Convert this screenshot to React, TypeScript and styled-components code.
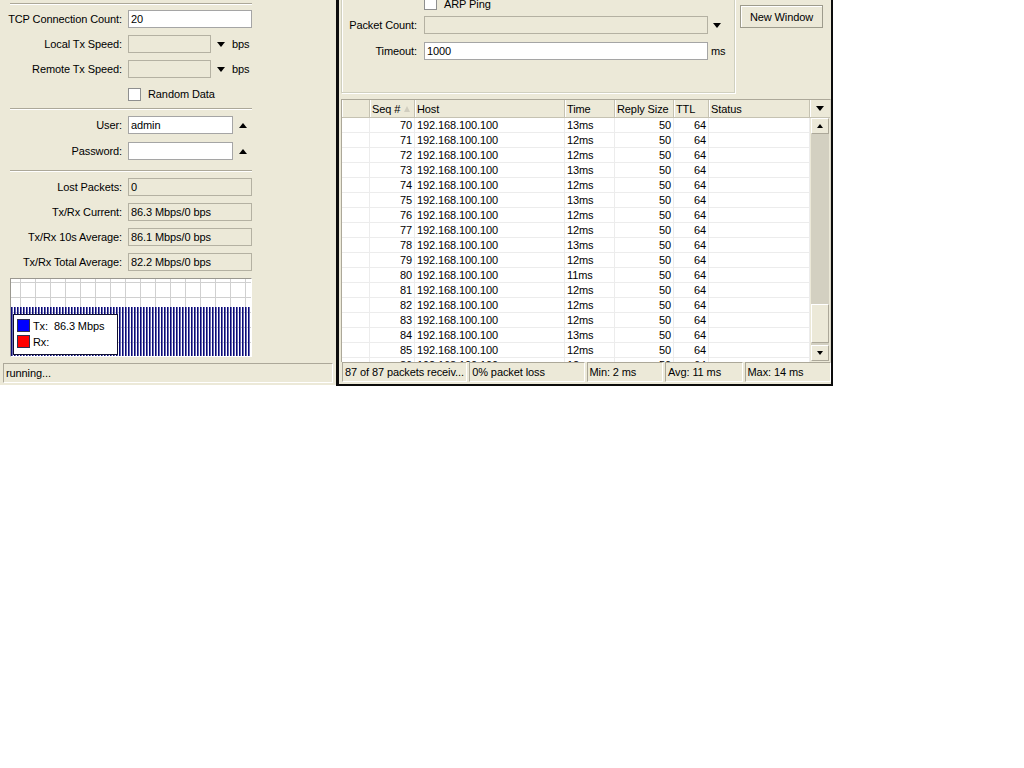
import styled, { createGlobalStyle } from 'styled-components';

const GlobalStyle = createGlobalStyle`
  html, body {
    margin: 0;
    padding: 0;
    background: #fff;
  }

  body {
    font-family: "Liberation Sans", Arial, sans-serif;
    font-size: 11px;
    letter-spacing: -0.1px;
    color: #000;
  }
`;

const times = [13, 12, 12, 13, 12, 13, 12, 12, 13, 12, 11, 12, 12, 12, 13, 12, 12];

const rows = times.map((t, i) => ({
  seq: 70 + i,
  host: '192.168.100.100',
  time: `${t}ms`,
  size: 50,
  ttl: 64,
}));

type Align = 'left' | 'right';

interface Column {
  title: string;
  width: number;
  align: Align;
  sorted?: boolean;
}

const columns: Column[] = [
  { title: '', width: 28, align: 'left' },
  { title: 'Seq #', width: 45, align: 'right', sorted: true },
  { title: 'Host', width: 150, align: 'left' },
  { title: 'Time', width: 50, align: 'left' },
  { title: 'Reply Size', width: 59, align: 'right' },
  { title: 'TTL', width: 35, align: 'right' },
  { title: 'Status', width: 101, align: 'left' },
];

const statusCells = [
  { text: '87 of 87 packets receiv...', width: 126 },
  { text: '0% packet loss', width: 116 },
  { text: 'Min: 2 ms', width: 77 },
  { text: 'Avg: 11 ms', width: 78 },
  { text: 'Max: 14 ms', width: 87 },
];

const Graph = () => {
  const bars = [];
  for (let x = 0; x < 240; x += 3) {
    bars.push(
      <g key={x}>
        <rect x={x} y={28} width={1} height={49} fill="#0a0a78" />
        <rect x={x + 1} y={28} width={1} height={49} fill="#6a6ab0" />
      </g>,
    );
  }
  const vLines = [];
  for (let x = 9; x < 240; x += 15) {
    vLines.push(<line key={x} x1={x + 0.5} y1={0} x2={x + 0.5} y2={77} stroke="#d0d0d0" />);
  }
  const hLines = [3, 18, 33, 48, 63].map((y) => (
    <line key={y} x1={0} y1={y + 0.5} x2={240} y2={y + 0.5} stroke="#d0d0d0" />
  ));

  return (
    <svg width="240" height="77" viewBox="0 0 240 77">
      <rect x={0} y={0} width={240} height={77} fill="#fff" />
      {vLines}
      {hLines}
      {bars}
    </svg>
  );
};

const App = () => {
  return (
    <>
      <GlobalStyle />
      <Desktop>
        <LeftWindow>
          <Separator />
          <Section $top={5} $bottom={5} $gap={7}>
            <FormRow>
              <Label>TCP Connection Count:</Label>
              <Field $width={124}>20</Field>
            </FormRow>
            <FormRow>
              <Label>Local Tx Speed:</Label>
              <Field $width={83} $disabled />
              <DownArrow $gap={6} />
              <Unit $gap={7}>bps</Unit>
            </FormRow>
            <FormRow>
              <Label>Remote Tx Speed:</Label>
              <Field $width={83} $disabled />
              <DownArrow $gap={6} />
              <Unit $gap={7}>bps</Unit>
            </FormRow>
            <FormRow>
              <Label />
              <CheckBox />
              <CheckText>Random Data</CheckText>
            </FormRow>
          </Section>
          <Separator />
          <Section $top={6} $bottom={10} $gap={8}>
            <FormRow>
              <Label>User:</Label>
              <Field $width={105}>admin</Field>
              <UpArrow />
            </FormRow>
            <FormRow>
              <Label>Password:</Label>
              <Field $width={105} />
              <UpArrow />
            </FormRow>
          </Section>
          <Separator />
          <Section $top={6} $bottom={0} $gap={7}>
            <FormRow>
              <Label>Lost Packets:</Label>
              <Field $width={124} $disabled>0</Field>
            </FormRow>
            <FormRow>
              <Label>Tx/Rx Current:</Label>
              <Field $width={124} $disabled>86.3 Mbps/0 bps</Field>
            </FormRow>
            <FormRow>
              <Label>Tx/Rx 10s Average:</Label>
              <Field $width={124} $disabled>86.1 Mbps/0 bps</Field>
            </FormRow>
            <FormRow>
              <Label>Tx/Rx Total Average:</Label>
              <Field $width={124} $disabled>82.2 Mbps/0 bps</Field>
            </FormRow>
          </Section>
          <GraphFrame>
            <Graph />
            <Legend>
              <LegendItem>
                <Swatch $color="#0000ff" />
                <LegendText>Tx:  86.3 Mbps</LegendText>
              </LegendItem>
              <LegendItem>
                <Swatch $color="#ff0000" />
                <LegendText>Rx:</LegendText>
              </LegendItem>
            </Legend>
          </GraphFrame>
          <StatusLine>running...</StatusLine>
        </LeftWindow>

        <RightWindow>
          <TopArea>
            <GroupBox>
              <CheckRow>
                <CheckBox />
                <CheckText>ARP Ping</CheckText>
              </CheckRow>
              <GroupRow>
                <GroupLabel>Packet Count:</GroupLabel>
                <Field $width={284} $disabled />
                <DownArrow $gap={5} />
              </GroupRow>
              <GroupRow>
                <GroupLabel>Timeout:</GroupLabel>
                <Field $width={284}>1000</Field>
                <Unit $gap={3}>ms</Unit>
              </GroupRow>
            </GroupBox>
            <Button>New Window</Button>
          </TopArea>

          <Table>
            <HeaderRow>
              {columns.map((col, i) => (
                <HeaderCell key={i} $width={col.width}>
                  {col.title}
                  {col.sorted && <SortMark />}
                </HeaderCell>
              ))}
              <HeaderMenu>
                <DownArrow $gap={0} />
              </HeaderMenu>
            </HeaderRow>
            <TableBody>
              <RowArea>
                {rows.map((row) => (
                  <Row key={row.seq}>
                    <Cell $width={28} $align="left" />
                    <Cell $width={45} $align="right">{row.seq}</Cell>
                    <Cell $width={150} $align="left">{row.host}</Cell>
                    <Cell $width={50} $align="left">{row.time}</Cell>
                    <Cell $width={59} $align="right">{row.size}</Cell>
                    <Cell $width={35} $align="right">{row.ttl}</Cell>
                    <Cell $width={101} $align="left" />
                  </Row>
                ))}
              </RowArea>
              <ScrollBar>
                <ScrollButton>
                  <SmallUp />
                </ScrollButton>
                <ScrollTrack>
                  <ScrollThumb />
                </ScrollTrack>
                <ScrollButton>
                  <SmallDown />
                </ScrollButton>
              </ScrollBar>
            </TableBody>
          </Table>

          <StatusBar>
            {statusCells.map((cell) => (
              <StatusCell key={cell.text} $width={cell.width}>
                {cell.text}
              </StatusCell>
            ))}
          </StatusBar>
        </RightWindow>
      </Desktop>
    </>
  );
};

const Desktop = styled.div`
  display: flex;
  align-items: flex-start;
`;

const LeftWindow = styled.div`
  display: flex;
  width: 336px;
  height: 385px;
  padding-top: 3px;
  flex-direction: column;
  box-sizing: border-box;

  background: #ece9d8;
`;

const Separator = styled.div`
  width: 242px;
  margin-left: 10px;

  border-top: 1px solid #aca899;
  border-bottom: 1px solid #fff;
`;

const Section = styled.div<{ $top: number; $bottom: number; $gap: number }>`
  display: flex;
  padding: ${({ $top, $bottom }) => `${$top}px 0 ${$bottom}px`};
  flex-direction: column;
  gap: ${({ $gap }) => $gap}px;
`;

const FormRow = styled.div`
  display: flex;
  height: 18px;
  align-items: center;
`;

const Label = styled.div`
  width: 122px;
  margin-right: 6px;
  flex-shrink: 0;

  text-align: right;
  white-space: nowrap;
`;

const Field = styled.div<{ $width: number; $disabled?: boolean }>`
  display: flex;
  width: ${({ $width }) => $width}px;
  height: 18px;
  padding-left: 2px;
  box-sizing: border-box;
  flex-shrink: 0;
  align-items: center;

  background: ${({ $disabled }) => ($disabled ? '#ece9d8' : '#fff')};
  border: 1px solid ${({ $disabled }) => ($disabled ? '#b4b1a2' : '#a5a5a5')};
  white-space: nowrap;
  overflow: hidden;
`;

const DownArrow = styled.span<{ $gap: number }>`
  display: inline-block;
  width: 0;
  height: 0;
  margin-left: ${({ $gap }) => $gap}px;

  border-top: 5px solid #000;
  border-right: 4.5px solid transparent;
  border-left: 4.5px solid transparent;
`;

const UpArrow = styled.span`
  display: inline-block;
  width: 0;
  height: 0;
  margin-left: 6px;

  border-bottom: 5px solid #000;
  border-right: 4.5px solid transparent;
  border-left: 4.5px solid transparent;
`;

const Unit = styled.span<{ $gap: number }>`
  margin-left: ${({ $gap }) => $gap}px;
`;

const CheckBox = styled.span`
  display: inline-block;
  width: 13px;
  height: 13px;
  box-sizing: border-box;
  flex-shrink: 0;

  background: #fff;
  border: 1px solid #8e8f8f;
`;

const CheckText = styled.span`
  margin-left: 7px;
`;

const GraphFrame = styled.div`
  position: relative;
  width: 242px;
  height: 79px;
  margin: 7px 0 0 10px;
  box-sizing: border-box;

  border-top: 1px solid #9a9890;
  border-left: 1px solid #9a9890;
  border-right: 1px solid #fff;
  border-bottom: 1px solid #fff;

  svg {
    display: block;
  }
`;

const Legend = styled.div`
  position: absolute;
  top: 35px;
  left: 2px;
  display: flex;
  width: 105px;
  height: 41px;
  padding: 4px 3px;
  box-sizing: border-box;
  flex-direction: column;
  gap: 3px;

  background: #fff;
  border: 1px solid #101030;
`;

const LegendItem = styled.div`
  display: flex;
  height: 13px;
  align-items: center;
`;

const Swatch = styled.span<{ $color: string }>`
  display: inline-block;
  width: 13px;
  height: 13px;
  margin-right: 3px;
  box-sizing: border-box;

  background: ${({ $color }) => $color};
  border: 1px solid #303050;
`;

const LegendText = styled.span`
  white-space: pre;
`;

const StatusLine = styled.div`
  display: flex;
  height: 20px;
  margin: 6px 3px 0;
  padding-left: 2px;
  box-sizing: border-box;
  align-items: center;

  border-top: 1px solid #aca899;
  border-left: 1px solid #aca899;
  border-right: 1px solid #fff;
  border-bottom: 1px solid #fff;
`;

const RightWindow = styled.div`
  display: flex;
  width: 497px;
  height: 386px;
  padding-left: 2px;
  box-sizing: border-box;
  flex-direction: column;

  background: #ece9d8;
  border-left: 3px solid #0c0c0c;
  border-right: 2px solid #0c0c0c;
  border-bottom: 2px solid #0c0c0c;
  overflow: hidden;
`;

const TopArea = styled.div`
  display: flex;
  height: 99px;
  align-items: flex-start;
`;

const GroupBox = styled.div`
  display: flex;
  width: 394px;
  height: 101px;
  margin-top: -8px;
  padding-top: 4px;
  box-sizing: border-box;
  flex-direction: column;

  border: 1px solid #d0d0bf;
  box-shadow: 1px 1px 0 #fff, inset 1px 1px 0 #fff;
`;

const CheckRow = styled.div`
  display: flex;
  height: 13px;
  padding-left: 82px;
  align-items: center;
`;

const GroupRow = styled.div`
  display: flex;
  height: 18px;
  margin-top: 6px;
  align-items: center;

  & + & {
    margin-top: 8px;
  }
`;

const GroupLabel = styled.div`
  width: 75px;
  margin-right: 7px;
  flex-shrink: 0;

  text-align: right;
  white-space: nowrap;
`;

const Button = styled.div`
  display: flex;
  width: 83px;
  height: 23px;
  margin: 5px 0 0 5px;
  box-sizing: border-box;
  align-items: center;
  justify-content: center;

  background: #ece9d8;
  border: 1px solid #9d9b8c;
  box-shadow: inset 1px 1px 0 #fff;
`;

const Table = styled.div`
  display: flex;
  width: 490px;
  height: 263px;
  box-sizing: border-box;
  flex-direction: column;

  border-top: 1px solid #aca899;
  border-left: 1px solid #aca899;
  border-right: 1px solid #d6d3c4;
`;

const HeaderRow = styled.div`
  display: flex;
  height: 18px;
  flex-shrink: 0;

  background: #ece9d8;
  border-bottom: 1px solid #c5c2b2;
  box-sizing: border-box;
`;

const HeaderCell = styled.div<{ $width: number }>`
  display: flex;
  width: ${({ $width }) => $width}px;
  padding-left: 2px;
  box-sizing: border-box;
  flex-shrink: 0;
  align-items: center;

  border-right: 1px solid #c5c2b2;
  box-shadow: inset 1px 0 0 #fff;
  white-space: nowrap;
`;

const SortMark = styled.span`
  display: inline-block;
  width: 0;
  height: 0;
  margin-left: 4px;

  border-bottom: 6px solid #d0cdbf;
  border-right: 3px solid transparent;
  border-left: 3px solid transparent;
`;

const HeaderMenu = styled.div`
  display: flex;
  flex: 1;
  align-items: center;
  justify-content: center;

  box-shadow: inset 1px 0 0 #fff;
`;

const TableBody = styled.div`
  display: flex;
  flex: 1;
  min-height: 0;
`;

const RowArea = styled.div`
  width: 468px;
  flex-shrink: 0;

  background: #fff;
  overflow: hidden;
`;

const Row = styled.div`
  display: flex;
  height: 15px;
  box-sizing: border-box;

  border-bottom: 1px solid #ececec;
`;

const Cell = styled.div<{ $width: number; $align: Align }>`
  width: ${({ $width }) => $width}px;
  padding: ${({ $align }) => ($align === 'right' ? '0 2px 0 0' : '0 0 0 2px')};
  box-sizing: border-box;
  flex-shrink: 0;

  border-right: 1px solid #ececec;
  line-height: 14px;
  text-align: ${({ $align }) => $align};
  white-space: nowrap;
`;

const ScrollBar = styled.div`
  display: flex;
  flex: 1;
  padding: 0 1px 1px;
  flex-direction: column;

  background: #ece9d8;
`;

const ScrollButton = styled.div`
  display: flex;
  height: 16px;
  box-sizing: border-box;
  flex-shrink: 0;
  align-items: center;
  justify-content: center;

  background: #ece9d8;
  border-top: 1px solid #fff;
  border-left: 1px solid #fff;
  border-right: 1px solid #aca899;
  border-bottom: 1px solid #aca899;
`;

const ScrollTrack = styled.div`
  display: flex;
  flex: 1;
  padding-bottom: 2px;
  flex-direction: column;
  justify-content: flex-end;

  background: #d3d0c1;
`;

const ScrollThumb = styled.div`
  height: 39px;
  box-sizing: border-box;

  background: #ece9d8;
  border-top: 1px solid #fff;
  border-left: 1px solid #fff;
  border-right: 1px solid #aca899;
  border-bottom: 1px solid #aca899;
`;

const SmallUp = styled.span`
  width: 0;
  height: 0;

  border-bottom: 4px solid #000;
  border-right: 3.5px solid transparent;
  border-left: 3.5px solid transparent;
`;

const SmallDown = styled.span`
  width: 0;
  height: 0;

  border-top: 4px solid #000;
  border-right: 3.5px solid transparent;
  border-left: 3.5px solid transparent;
`;

const StatusBar = styled.div`
  display: flex;
  height: 20px;
  padding-left: 1px;
  gap: 2px;
`;

const StatusCell = styled.div<{ $width: number }>`
  display: flex;
  width: ${({ $width }) => $width}px;
  padding-left: 2px;
  box-sizing: border-box;
  align-items: center;

  border-top: 1px solid #aca899;
  border-left: 1px solid #aca899;
  border-right: 1px solid #fff;
  border-bottom: 1px solid #fff;
  white-space: nowrap;
  overflow: hidden;
`;

export default App;
